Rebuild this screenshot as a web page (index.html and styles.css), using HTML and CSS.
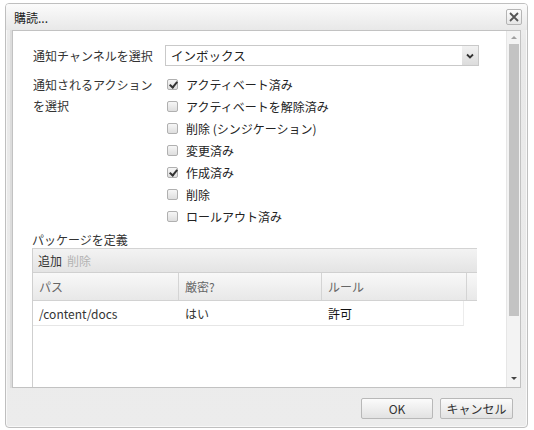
FILE: index.html
```html
<!DOCTYPE html>
<html lang="ja">
<head>
<meta charset="utf-8">
<title>購読</title>
<link rel="stylesheet" href="styles.css">
</head>
<body>
<div class="dialog">
  <div class="titlebar">
    <span class="title">購読...</span>
    <span class="close">
      <svg width="10" height="10" viewBox="0 0 10 10"><path d="M1 1 L9 9 M9 1 L1 9" stroke="#555" stroke-width="1.8" fill="none"/></svg>
    </span>
  </div>
  <div class="main">
    <div class="content">
      <div class="row">
        <div class="label">通知チャンネルを選択</div>
        <div class="select">
          <span class="select-text">インボックス</span>
          <span class="select-btn">
            <svg width="8" height="6" viewBox="0 0 8 6"><path d="M1 1.5 L4 4.5 L7 1.5" stroke="#333" stroke-width="1.8" fill="none"/></svg>
          </span>
        </div>
      </div>
      <div class="row row-actions">
        <div class="label label-multi">通知されるアクション<br>を選択</div>
        <ul class="checks">
          <li class="check"><span class="box checked"></span>アクティベート済み</li>
          <li class="check"><span class="box"></span>アクティベートを解除済み</li>
          <li class="check"><span class="box"></span>削除 (シンジケーション)</li>
          <li class="check"><span class="box"></span>変更済み</li>
          <li class="check"><span class="box checked"></span>作成済み</li>
          <li class="check"><span class="box"></span>削除</li>
          <li class="check"><span class="box"></span>ロールアウト済み</li>
        </ul>
      </div>
      <div class="section-label">パッケージを定義</div>
      <div class="grid">
        <div class="toolbar">
          <span class="tb-btn">追加</span>
          <span class="tb-btn disabled">削除</span>
        </div>
        <div class="grid-head">
          <div class="hcell c1">パス</div>
          <div class="hcell c2">厳密?</div>
          <div class="hcell c3">ルール</div>
          <div class="hcell c4"></div>
        </div>
        <div class="grid-row">
          <div class="cell c1">/content/docs</div>
          <div class="cell c2">はい</div>
          <div class="cell c3 strong">許可</div>
        </div>
      </div>
    </div>
    <div class="scrollbar">
      <span class="arrow up"></span>
      <span class="thumb"></span>
      <span class="arrow down"></span>
    </div>
  </div>
  <div class="footer">
    <button class="btn ok">OK</button>
    <button class="btn cancel">キャンセル</button>
  </div>
</div>
</body>
</html>
```

FILE: styles.css
```css
* { box-sizing: border-box; }
html, body { margin: 0; padding: 0; }
body {
  background: #ffffff;
  font-family: "Noto Sans CJK JP", "Noto Sans", sans-serif;
  font-size: 12px;
  font-weight: 400;
  color: #333;
}
.dialog {
  margin: 3px 0 0 5px;
  width: 523px;
  height: 425px;
  border: 1px solid #bfbfbf;
  border-radius: 4px;
  background: linear-gradient(#f4f4f4, #e9e9e9 40px, #ececec);
  display: flex;
  flex-direction: column;
  box-shadow: inset 0 0 0 1px #f8f8f8;
}
.titlebar {
  height: 26px;
  display: flex;
  align-items: center;
  justify-content: space-between;
  padding: 0 5px 0 8px;
  background: linear-gradient(#fbfbfb, #e8e8e8);
  border-radius: 3px 3px 0 0;
}
.title { color: #222; font-size: 12px; }
.close {
  width: 16px;
  height: 16px;
  border: 1px solid #b5b5b5;
  border-radius: 2px;
  background: linear-gradient(#fdfdfd, #e6e6e6);
  display: flex;
  align-items: center;
  justify-content: center;
}
.main {
  margin: 0 6px;
  height: 358px;
  border: 1px solid #c2c2c2;
  background: #fff;
  display: flex;
  box-shadow: -2px 0 0 #dcdcdc;
}
.content {
  flex: 1;
  overflow: hidden;
  padding: 14px 0 0 19px;
}
.row { display: flex; }
.label {
  width: 133px;
  padding-left: 1px;
  line-height: 21px;
  color: #333;
}
.select {
  width: 314px;
  height: 21px;
  border: 1px solid #c9c9c9;
  display: flex;
  align-items: center;
  background: #fff;
}
.select-text { flex: 1; padding-left: 5px; font-size: 12.5px; color: #222; }
.select-btn {
  width: 16px;
  height: 19px;
  background: linear-gradient(#f2f2f2, #dcdcdc);
  display: flex;
  align-items: center;
  justify-content: center;
}
.row-actions { margin-top: 7px; }
.label-multi { line-height: 21px; padding-top: 1px; }
.checks { list-style: none; margin: 0; padding: 0; }
.check {
  height: 22px;
  display: flex;
  align-items: center;
  color: #222;
}
.box {
  width: 11px;
  height: 11px;
  margin: 0 8px 0 2px;
  border: 1px solid #b0b0b0;
  border-radius: 2px;
  background: linear-gradient(#f6f6f6, #dedede);
  position: relative;
}
.box.checked::after {
  content: "";
  position: absolute;
  left: 3px;
  top: 0px;
  width: 3px;
  height: 6px;
  border: solid #333;
  border-width: 0 2px 2px 0;
  transform: rotate(40deg);
}
.section-label {
  margin-top: 5px;
  height: 16px;
  line-height: 16px;
  color: #333;
}
.grid {
  width: 445px;
  height: 200px;
  border-left: 1px solid #cfcfcf;
  border-top: 1px solid #d3d3d3;
}
.toolbar {
  height: 24px;
  display: flex;
  align-items: center;
  gap: 5px;
  padding-left: 5px;
  background: linear-gradient(#f3f3f3, #e4e4e4);
  border-bottom: 1px solid #d0d0d0;
}
.tb-btn { color: #333; }
.tb-btn.disabled { color: #b3b3b3; }
.grid-head {
  height: 28px;
  display: flex;
  background: linear-gradient(#f8f8f8, #e8e8e8);
  border-bottom: 1px solid #d2d2d2;
}
.hcell {
  display: flex;
  align-items: center;
  padding-left: 6px;
  color: #666;
  border-right: 1px solid #d4d4d4;
}
.c1 { width: 146px; }
.c2 { width: 143px; }
.c3 { width: 145px; }
.c4 { flex: 1; border-right: none; }
.grid-row {
  width: 431px;
  height: 25px;
  display: flex;
  border-bottom: 1px solid #e6e6e6;
  border-right: 1px solid #ececec;
}
.cell {
  display: flex;
  align-items: center;
  padding-left: 6px;
  color: #333;
  font-weight: 400;
}
.cell.c3 { flex: 1; }
.strong { color: #111; }
.scrollbar {
  width: 14px;
  background: #f3f3f3;
  border-left: 1px solid #e6e6e6;
  display: flex;
  flex-direction: column;
  align-items: center;
}
.arrow {
  width: 0;
  height: 0;
  border-left: 3px solid transparent;
  border-right: 3px solid transparent;
}
.arrow.up { border-bottom: 3px solid #a0a0a0; margin-top: 5px; }
.arrow.down { border-top: 3px solid #444; margin-top: 61px; }
.thumb {
  width: 10px;
  height: 272px;
  margin-top: 5px;
  background: #c3c3c3;
}
.footer {
  flex: 1;
  display: flex;
  justify-content: flex-end;
  align-items: flex-start;
  gap: 7px;
  padding: 10px 14px 0 0;
}
.btn {
  height: 21px;
  border: 1px solid #b8b8b8;
  border-radius: 2px;
  background: linear-gradient(#fbfbfb, #e2e2e2);
  font-family: "Noto Sans CJK JP", "Noto Sans", sans-serif;
  font-size: 12px;
  color: #333;
  padding: 0;
}
.ok { width: 72px; }
.cancel { width: 73px; }
```
